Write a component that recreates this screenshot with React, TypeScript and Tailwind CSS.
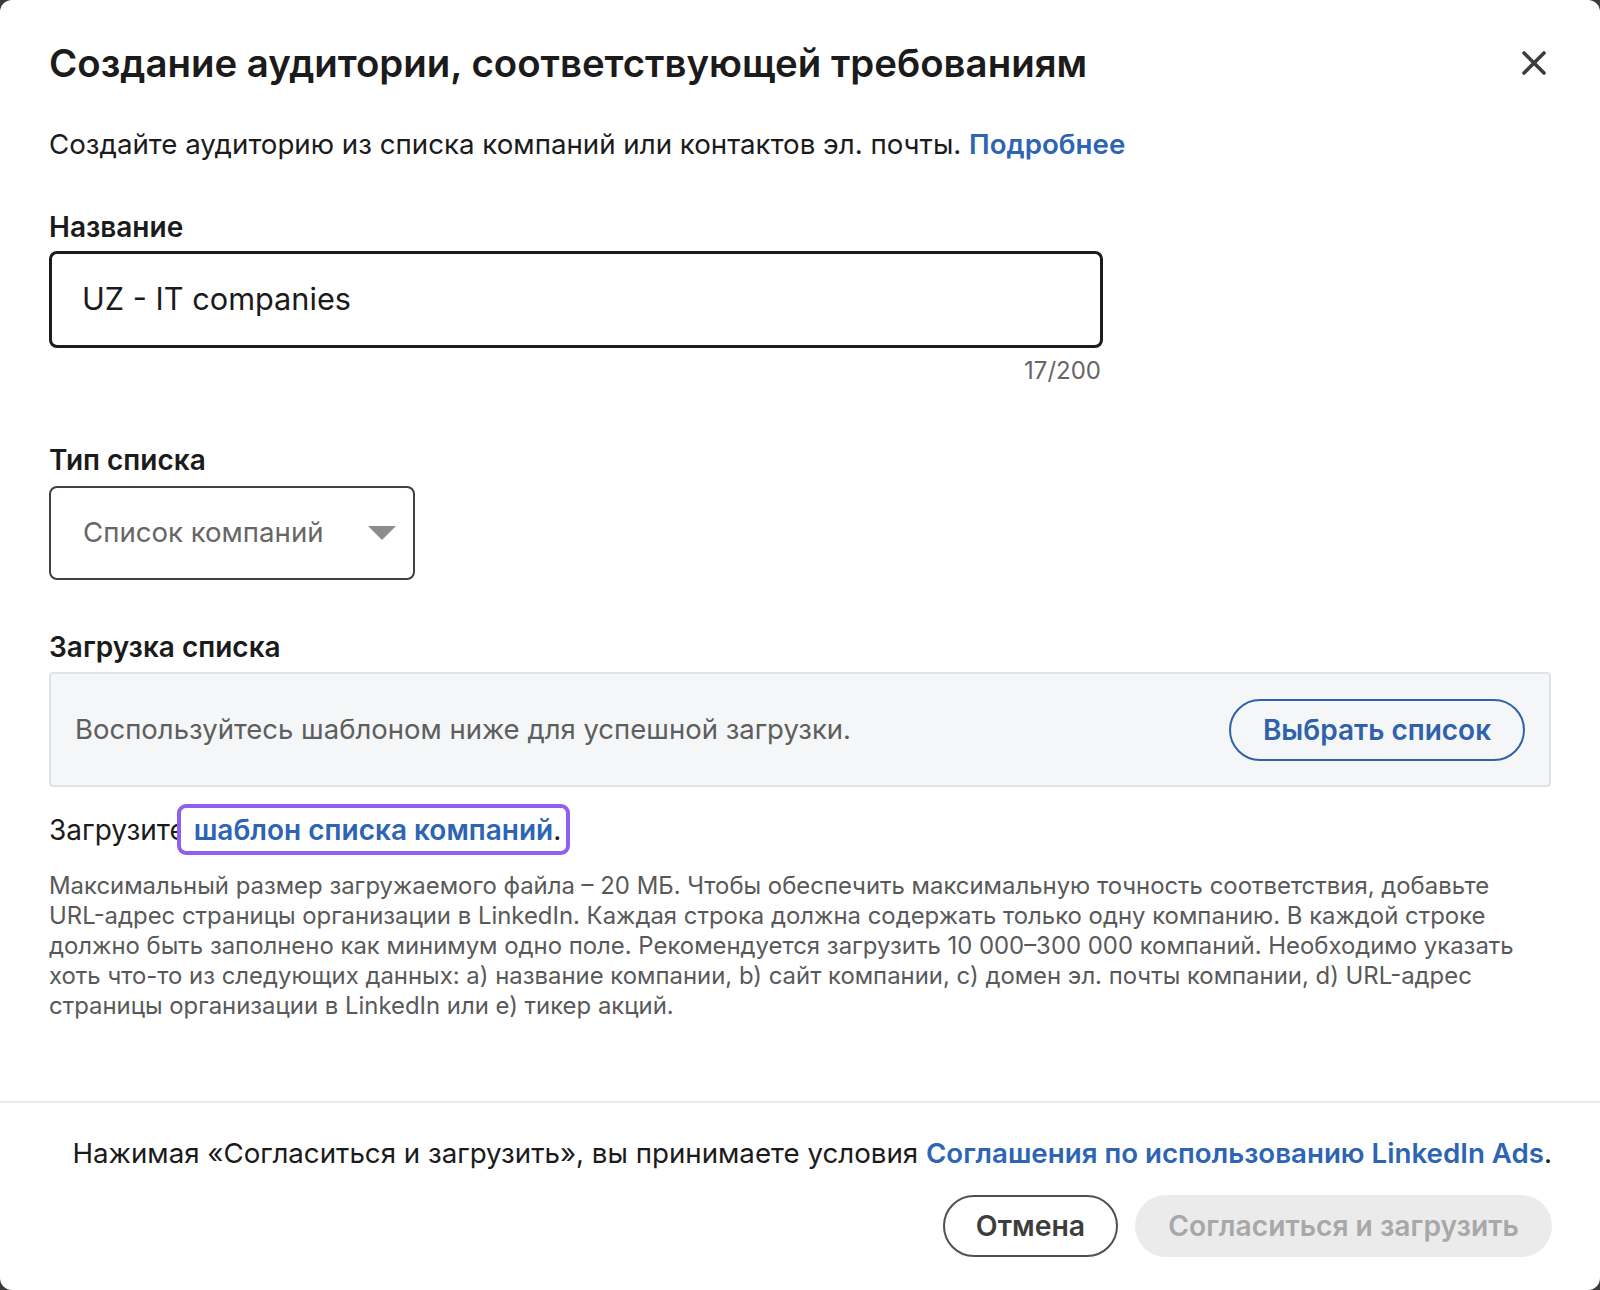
import React from 'react'

const font = { fontFamily: 'Inter, "Noto Sans", sans-serif' }

const CloseIcon = () => (
  <svg width="26" height="26" viewBox="0 0 26 26" fill="none" stroke="#3d3d3d" strokeWidth="3.6" strokeLinecap="round">
    <path d="M3 3 L23 23" />
    <path d="M23 3 L3 23" />
  </svg>
)

const Caret = () => (
  <svg width="28" height="14" viewBox="0 0 28 14">
    <path d="M0 0 H28 L14 14 Z" fill="#8c8c8c" />
  </svg>
)

export default function App() {
  return (
    <div className="w-[1600px] h-[1290px] bg-[#3a3a3a]" style={font}>
      <div className="h-full rounded-[12px] bg-white flex flex-col text-[#1b1b1b]">
        <div className="px-[49px] pt-[39px] flex-1">
          {/* header */}
          <div className="flex items-center justify-between">
            <h1 className="text-[38.4px] leading-[48px] font-semibold">
              Создание аудитории, соответствующей требованиям
            </h1>
            <button className="w-[26px] h-[26px] mr-[4px] flex items-center justify-center">
              <CloseIcon />
            </button>
          </div>

          <p className="mt-[39px] text-[27.7px] leading-[36px]">
            Создайте аудиторию из списка компаний или контактов эл. почты.{' '}
            <a className="font-semibold text-[#2d64b3]">Подробнее</a>
          </p>

          {/* name */}
          <div className="mt-[47px] w-[1054px]">
            <label className="block text-[28px] leading-[36px] font-semibold">Название</label>
            <div className="mt-[6px] h-[97px] rounded-[8px] border-[3px] border-[#1c1c1c] flex items-center pl-[30px]">
              <span className="text-[30.7px]">UZ - IT companies</span>
            </div>
            <div className="mt-[8px] text-right text-[24px] leading-[30px] text-[#666666] pr-[2px]">17/200</div>
          </div>

          {/* list type */}
          <div className="mt-[56px]">
            <label className="block text-[28px] leading-[36px] font-semibold">Тип списка</label>
            <div className="mt-[8px] w-[366px] h-[94px] rounded-[8px] border-2 border-[#404040] flex items-center justify-between pl-[32px] pr-[17px]">
              <span className="text-[27.6px] text-[#666666]">Список компаний</span>
              <Caret />
            </div>
          </div>

          {/* upload */}
          <div className="mt-[49px]">
            <label className="block text-[28px] leading-[36px] font-semibold">Загрузка списка</label>
            <div className="mt-[7px] h-[115px] rounded-[4px] border-2 border-[#e2e3e4] bg-[#f4f6f8] flex items-center justify-between pl-[24px] pr-[24px]">
              <span className="text-[27.5px] text-[#5e5e5e]">Воспользуйтесь шаблоном ниже для успешной загрузки.</span>
              <button className="h-[62px] w-[296px] rounded-full border-2 border-[#2f62aa] text-[#2f62aa] text-[28px] font-semibold">
                Выбрать список
              </button>
            </div>
          </div>

          <p className="mt-[25px] text-[28px] leading-[36px]">
            Загрузите{' '}
            <span className="relative inline-block">
              <span className="absolute -left-[17px] -right-[9px] -top-[8px] -bottom-[7px] rounded-[9px] border-4 border-[#8f5ff0] bg-white" />
              <span className="relative font-semibold text-[#2d64b3]">шаблон списка компаний</span>
              <span className="relative">.</span>
            </span>
          </p>

          <p className="mt-[23px] text-[23.9px] leading-[30px] text-[#595959]">
            Максимальный размер загружаемого файла – 20 МБ. Чтобы обеспечить максимальную точность соответствия, добавьте URL-адрес страницы организации в LinkedIn. Каждая строка должна содержать только одну компанию. В каждой строке должно быть заполнено как минимум одно поле. Рекомендуется загрузить 10 000–300 000 компаний. Необходимо указать хоть что-то из следующих данных: a) название компании, b) сайт компании, c) домен эл. почты компании, d) URL-адрес страницы организации в LinkedIn или e) тикер акций.
          </p>
        </div>

        {/* footer */}
        <div className="border-t-2 border-[#e9e9e9] px-[48px] pt-[32px] pb-[33px]">
          <p className="text-right text-[27.7px] leading-[36px]">
            Нажимая «Согласиться и загрузить», вы принимаете условия{' '}
            <a className="font-semibold text-[#2d64b3]">Соглашения по использованию LinkedIn Ads</a>.
          </p>
          <div className="mt-[24px] flex justify-end gap-[17px]">
            <button className="h-[62px] w-[175px] rounded-full border-2 border-[#505050] text-[28.4px] font-semibold text-[#3d3d3d]">
              Отмена
            </button>
            <button className="h-[62px] w-[417px] rounded-full bg-[#ebebeb] text-[28.2px] font-semibold text-[#a8a8a8]">
              Согласиться и загрузить
            </button>
          </div>
        </div>
      </div>
    </div>
  )
}
